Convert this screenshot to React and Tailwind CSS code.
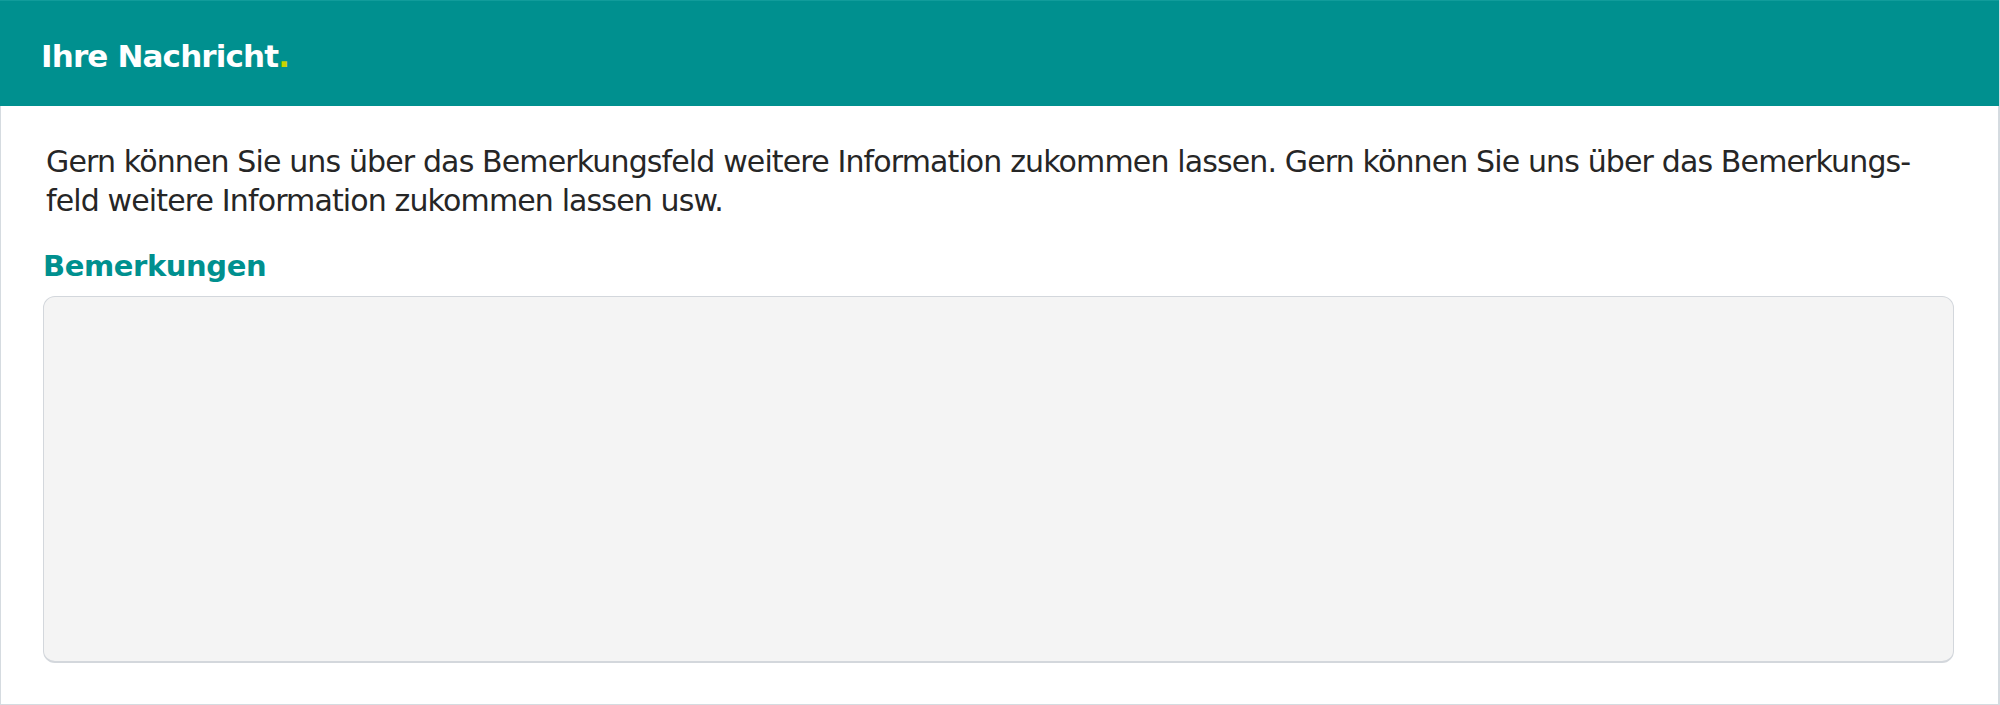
import React from 'react';

const App = () => {
  return (
    <div className="w-[2000px] h-[705px] bg-white font-['DejaVu_Sans',sans-serif]">
      <div className="h-full flex flex-col border border-r-2 border-[#d5dbe0] bg-white">
        {/* Header */}
        <div className="h-[106px] shrink-0 -mx-px -mt-px flex items-center pt-[6px] pl-[41px] bg-[#00908f] border-t border-[#119c9b]">
          <h2 className="text-[31px] leading-none font-bold tracking-[-0.85px] text-white">
            Ihre Nachricht<span className="text-[#c6d400]">.</span>
          </h2>
        </div>

        {/* Body */}
        <div className="flex-1 flex flex-col pl-[42px] pr-[44px] pt-[36px] pb-[41px]">
          <p className="pl-[3px] text-[30px] leading-[39px] tracking-[-0.87px] text-[#262626] whitespace-nowrap">
            Gern können Sie uns über das Bemerkungsfeld weitere Information zukommen lassen. Gern können Sie uns über das Bemerkungs-
            <br />
            feld weitere Information zukommen lassen usw.
          </p>

          <label
            htmlFor="bemerkungen"
            className="block mt-[30px] text-[29px] leading-[33px] font-bold tracking-[-0.4px] text-[#00908f]"
          >
            Bemerkungen
          </label>

          <textarea
            id="bemerkungen"
            className="mt-[13px] flex-1 w-full resize-none rounded-[12px] border border-b-2 border-[#d3d7dc] bg-[#f4f4f4] outline-none"
          />
        </div>
      </div>
    </div>
  );
};

export default App;
